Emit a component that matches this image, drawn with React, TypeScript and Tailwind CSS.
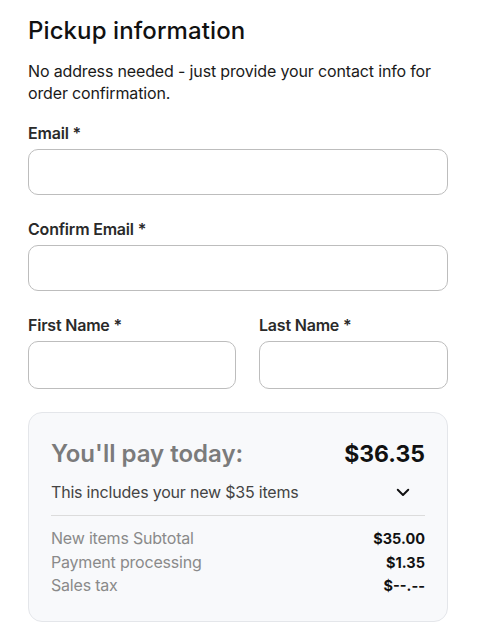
import React from "react";

function Field({ label, h = "h-[46px]" }: { label: string; h?: string }) {
  return (
    <div className="flex flex-col">
      <label className="text-[16px] leading-[22px] font-semibold text-[#2a2a2a] tracking-[-0.2px]">{label}</label>
      <div className={`mt-[5px] ${h} rounded-[10px] border border-[#bdbdbd] bg-white`} />
    </div>
  );
}

export default function App() {
  return (
    <div
      className="w-[484px] h-[636px] bg-white pl-[28px] pr-[36px] pt-[15px] text-black"
      style={{ fontFamily: "Inter, 'Noto Sans', sans-serif" }}
    >
      <h1 className="text-[24px] leading-[32px] font-medium text-[#111] tracking-[0.1px]">Pickup information</h1>
      <p className="mt-[13px] text-[16px] leading-[22px] text-[#1a1a1a] tracking-[-0.15px]">
        No address needed - just provide your contact info for order confirmation.
      </p>

      <div className="mt-[18px] flex flex-col gap-[23px]">
        <Field label="Email *" />
        <Field label="Confirm Email *" />
        <div className="flex gap-[23px]">
          <div className="w-[208px]">
            <Field label="First Name *" h="h-[48px]" />
          </div>
          <div className="flex-1">
            <Field label="Last Name *" h="h-[48px]" />
          </div>
        </div>
      </div>

      <div className="mt-[23px] rounded-[14px] border border-[#e4e6ea] bg-[#f8f9fb] px-[22px] pt-[26px] pb-[23px]">
        <div className="flex items-center justify-between">
          <span className="text-[24px] leading-[30px] font-semibold text-[#7b7b7b]">You'll pay today:</span>
          <span className="text-[23px] leading-[30px] font-bold text-[#111]">$36.35</span>
        </div>
        <div className="mt-[12px] flex items-center justify-between pb-[12px] border-b border-[#dcdcdc]">
          <span className="text-[16px] leading-[22px] text-[#444] tracking-[-0.2px]">This includes your new $35 items</span>
          <svg width="18" height="18" viewBox="0 0 24 24" fill="none" className="mr-[13px]">
            <path d="M5 9l7 7 7-7" stroke="#111" strokeWidth="2.6" strokeLinecap="round" strokeLinejoin="round" />
          </svg>
        </div>
        <div className="mt-[11px] flex flex-col">
          {[
            ["New items Subtotal", "$35.00"],
            ["Payment processing", "$1.35"],
            ["Sales tax", "$--.--"],
          ].map(([l, v]) => (
            <div key={l} className="flex items-center justify-between leading-[23.5px]">
              <span className="text-[16px] text-[#8a8a8a] tracking-[-0.2px]">{l}</span>
              <span className="text-[14.5px] font-bold text-[#111]">{v}</span>
            </div>
          ))}
        </div>
      </div>
    </div>
  );
}
